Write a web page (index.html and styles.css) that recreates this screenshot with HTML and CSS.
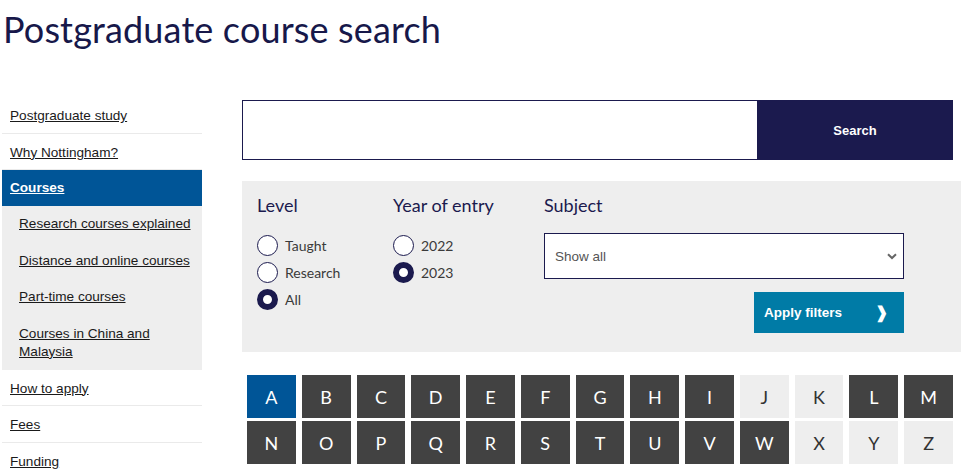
FILE: index.html
```html
<!DOCTYPE html>
<html lang="en">
<head>
<meta charset="utf-8">
<title>Postgraduate course search</title>
<link rel="stylesheet" href="styles.css">
</head>
<body>
<div class="page">
  <h1 class="title">Postgraduate course search</h1>
  <div class="layout">
    <nav class="sidenav">
      <ul class="nav-list">
        <li class="nav-item"><a href="#">Postgraduate study</a></li>
        <li class="nav-item"><a href="#">Why Nottingham?</a></li>
        <li class="nav-item nav-active"><a href="#">Courses</a></li>
        <li class="nav-sub">
          <ul class="sub-list">
            <li class="sub-item"><a href="#">Research courses explained</a></li>
            <li class="sub-item"><a href="#">Distance and online courses</a></li>
            <li class="sub-item"><a href="#">Part-time courses</a></li>
            <li class="sub-item"><a href="#">Courses in China and Malaysia</a></li>
          </ul>
        </li>
        <li class="nav-item"><a href="#">How to apply</a></li>
        <li class="nav-item"><a href="#">Fees</a></li>
        <li class="nav-item"><a href="#">Funding</a></li>
      </ul>
    </nav>
    <main class="main">
      <form class="search-bar">
        <input class="search-input" type="text" aria-label="Search courses">
        <button class="search-btn" type="button">Search</button>
      </form>
      <div class="filters">
        <div class="filter-group group-level">
          <div class="filter-title">Level</div>
          <label class="radio"><span class="radio-dot"></span><span class="radio-label">Taught</span></label>
          <label class="radio"><span class="radio-dot"></span><span class="radio-label">Research</span></label>
          <label class="radio"><span class="radio-dot checked"></span><span class="radio-label">All</span></label>
        </div>
        <div class="filter-group group-year">
          <div class="filter-title">Year of entry</div>
          <label class="radio"><span class="radio-dot"></span><span class="radio-label">2022</span></label>
          <label class="radio"><span class="radio-dot checked"></span><span class="radio-label">2023</span></label>
        </div>
        <div class="filter-group group-subject">
          <div class="filter-title">Subject</div>
          <div class="select">
            <span class="select-text">Show all</span>
            <svg class="select-chevron" width="10" height="7" viewBox="0 0 10 7"><path d="M1 1.2 L5 5 L9 1.2" fill="none" stroke="#666" stroke-width="2"/></svg>
          </div>
          <div class="apply-row">
            <button class="apply-btn" type="button"><span>Apply filters</span><span class="apply-arrow">&#10097;</span></button>
          </div>
        </div>
      </div>
      <ul class="az">
        <li class="tile tile-active">A</li>
        <li class="tile">B</li>
        <li class="tile">C</li>
        <li class="tile">D</li>
        <li class="tile">E</li>
        <li class="tile">F</li>
        <li class="tile">G</li>
        <li class="tile">H</li>
        <li class="tile">I</li>
        <li class="tile tile-off">J</li>
        <li class="tile tile-off">K</li>
        <li class="tile">L</li>
        <li class="tile">M</li>
        <li class="tile">N</li>
        <li class="tile">O</li>
        <li class="tile">P</li>
        <li class="tile">Q</li>
        <li class="tile">R</li>
        <li class="tile">S</li>
        <li class="tile">T</li>
        <li class="tile">U</li>
        <li class="tile">V</li>
        <li class="tile">W</li>
        <li class="tile tile-off">X</li>
        <li class="tile tile-off">Y</li>
        <li class="tile tile-off">Z</li>
      </ul>
    </main>
  </div>
</div>
</body>
</html>
```
FILE: styles.css
```css
* { box-sizing: border-box; }
html, body { margin: 0; padding: 0; background: #fff; }
body { font-family: "Liberation Sans", Arial, sans-serif; font-size: 13.6px; color: #222; overflow: hidden; }

.page { padding: 0 0 0 2px; }

.title {
  margin: 0;
  padding: 6px 0 0 1px;
  font-family: Lato, "Noto Sans", sans-serif;
  font-weight: 400;
  font-size: 36px;
  letter-spacing: 0.15px;
  line-height: 46px;
  color: #17184a;
  height: 97px;
}

.layout { display: flex; gap: 40px; align-items: flex-start; }

.sidenav { width: 200px; flex: none; }
.nav-list, .sub-list { list-style: none; margin: 0; padding: 0; }
.nav-item { border-bottom: 1px solid #eaeaea; }
.nav-item a { display: block; padding: 10px 8px 8.5px; line-height: 17px; color: #1a1a1a; }
.nav-active { background: #005597; border-bottom: none; }
.nav-active a { color: #fff; font-weight: bold; padding: 9px 8px 10px; }
.nav-sub { background: #eeeeee; }
.sub-item a { display: block; padding: 9px 8px 9.5px 17px; line-height: 18px; color: #1a1a1a; }
.sub-item:last-child a { padding-bottom: 9px; }

.main { width: 711px; flex: none; padding-top: 3px; }

.search-bar { display: flex; height: 60px; margin: 0; }
.search-input {
  flex: 1;
  border: 1px solid #1b1a4e;
  border-right: none;
  margin: 0;
  font: inherit;
  outline: none;
}
.search-btn {
  width: 196px;
  border: none;
  background: #1b1a4e;
  color: #fff;
  font-family: "Liberation Sans", Arial, sans-serif;
  font-weight: bold;
  font-size: 13px;
  margin: 0;
}

.filters {
  margin-top: 21px;
  margin-right: -8px;
  background: #eeeeee;
  height: 171px;
  display: flex;
  padding: 12px 0 0 15px;
}
.filter-group { display: flex; flex-direction: column; }
.group-level { width: 136px; }
.group-year { width: 151px; }
.group-subject { width: 360px; }
.filter-title {
  font-family: Lato, "Noto Sans", sans-serif;
  font-size: 18px;
  line-height: 24px;
  color: #1b1a4e;
  margin-bottom: 15px;
}
.radio { display: flex; align-items: center; height: 27px; }
.radio-dot {
  width: 21px; height: 21px; border-radius: 50%;
  border: 1.5px solid #1b1a4e; background: #fff; flex: none;
}
.radio-dot.checked { border: 6.5px solid #1b1a4e; }
.radio-label {
  margin-left: 7px;
  font-family: Lato, "Noto Sans", sans-serif;
  font-size: 14px;
  color: #3a3a3a;
}
.group-subject .filter-title { margin-bottom: 16px; }
.select {
  height: 46px;
  background: #fff;
  border: 1px solid #1b1a4e;
  display: flex;
  align-items: center;
  justify-content: space-between;
  padding: 0 6px 0 10px;
}
.select-text { color: #555; font-size: 13.5px; }
.select-chevron { display: block; }
.apply-row { display: flex; justify-content: flex-end; margin-top: 13px; }
.apply-btn {
  width: 150px; height: 41px;
  background: #007ba6; color: #fff; border: none;
  display: flex; align-items: center; justify-content: space-between;
  padding: 0 16px 0 10px;
  font-family: "Liberation Sans", Arial, sans-serif;
  font-weight: bold; font-size: 13.5px;
}
.apply-arrow { font-size: 16px; font-weight: bold; }

.az {
  list-style: none;
  margin: 23px 0 0 0;
  padding: 0 0 0 5px;
  display: grid;
  grid-template-columns: repeat(13, 1fr);
  column-gap: 6px;
  row-gap: 3px;
}
.tile {
  height: 43px;
  background: #424242;
  color: #fff;
  display: flex; align-items: center; justify-content: center;
  font-family: Lato, "Noto Sans", sans-serif;
  font-size: 18px;
}
.tile-active { background: #005597; }
.tile-off { background: #eeeeee; color: #333; }
```
